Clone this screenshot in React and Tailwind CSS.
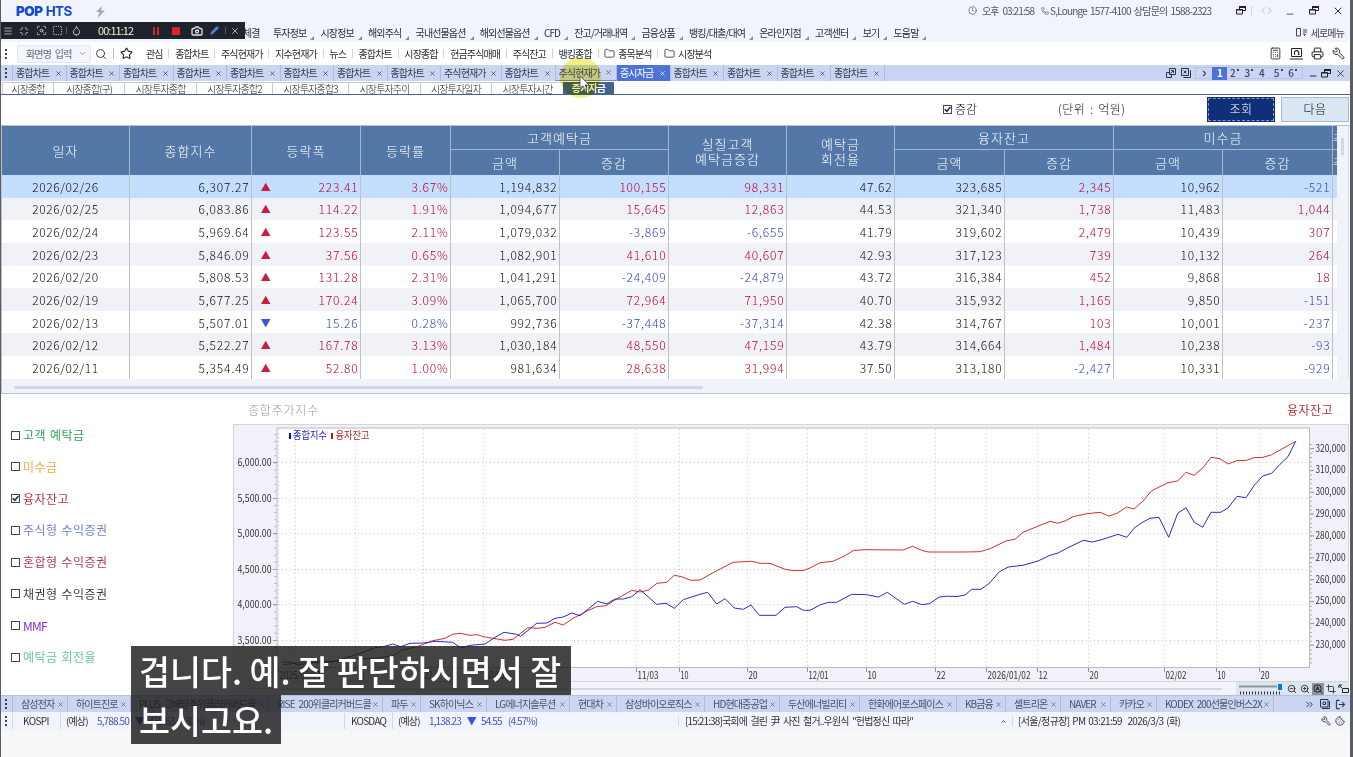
import React from 'react';
import {
    Calculator, Camera, ChevronDown, ChevronRight, ChevronUp, ChevronsRight, Clock, Code, Cookie,
    Crop, Droplet, Folder, LogOut, Menu, Minimize, Minus, Pencil, Phone, Printer, ScanSearch, Search,
    SquareDashed, Star, Wrench, X, ZoomIn, ZoomOut,
} from 'lucide-react';

const MENUS = ['투자정보', '시장정보', '해외주식', '국내선물옵션', '해외선물옵션', 'CFD', '잔고/거래내역', '금융상품', '뱅킹/대출/대여', '온라인지점', '고객센터', '보기', '도움말'];

const QUICK = ['관심', '종합차트', '주식현재가', '지수현재가', '뉴스', '종합차트', '시장종합', '현금주식매매', '주식잔고', '뱅킹종합'];

const TABS = [
    ...Array(8).fill({ name: '종합차트', w: 53.5 }),
    { name: '주식현재가', w: 60.5 },
    { name: '종합차트', w: 54 },
    { name: '주식현재가', w: 61.5, hover: true },
    { name: '증시자금', w: 53.5, active: true },
    ...Array(4).fill({ name: '종합차트', w: 53.5 }),
];

const SUB_TABS = [
    { name: '시장종합', w: 51 },
    { name: '시장종합(구)', w: 71 },
    { name: '시장투자종합', w: 72 },
    { name: '시장투자종합2', w: 76 },
    { name: '시장투자종합3', w: 76 },
    { name: '시장투자추이', w: 72 },
    { name: '시장투자일자', w: 71 },
    { name: '시장투자시간', w: 72 },
];

const STOCKS = [
    { name: '삼성전자', w: 55 },
    { name: '하이트진로', w: 63 },
    { name: 'PLUS 고배당주위클리커버드콜', w: 138 },
    { name: 'RISE 200위클리커버드콜', w: 114 },
    { name: '파두', w: 38 },
    { name: 'SK하이닉스', w: 66 },
    { name: 'LG에너지솔루션', w: 83 },
    { name: '현대차', w: 47 },
    { name: '삼성바이오로직스', w: 88 },
    { name: 'HD현대중공업', w: 75 },
    { name: '두산에너빌리티', w: 80 },
    { name: '한화에어로스페이스', w: 97 },
    { name: 'KB금융', w: 49 },
    { name: '셀트리온', w: 55 },
    { name: 'NAVER', w: 50 },
    { name: '카카오', w: 46 },
    { name: 'KODEX 200선물인버스2X', w: 117 },
];

const ROWS = [
    ['2026/02/26', '6,307.27', '223.41', '3.67%', '1,194,832', '100,155', '98,331', '47.62', '323,685', '2,345', '10,962', '-521'],
    ['2026/02/25', '6,083.86', '114.22', '1.91%', '1,094,677', '15,645', '12,863', '44.53', '321,340', '1,738', '11,483', '1,044'],
    ['2026/02/24', '5,969.64', '123.55', '2.11%', '1,079,032', '-3,869', '-6,655', '41.79', '319,602', '2,479', '10,439', '307'],
    ['2026/02/23', '5,846.09', '37.56', '0.65%', '1,082,901', '41,610', '40,607', '42.93', '317,123', '739', '10,132', '264'],
    ['2026/02/20', '5,808.53', '131.28', '2.31%', '1,041,291', '-24,409', '-24,879', '43.72', '316,384', '452', '9,868', '18'],
    ['2026/02/19', '5,677.25', '170.24', '3.09%', '1,065,700', '72,964', '71,950', '40.70', '315,932', '1,165', '9,850', '-151'],
    ['2026/02/13', '5,507.01', '15.26', '0.28%', '992,736', '-37,448', '-37,314', '42.38', '314,767', '103', '10,001', '-237'],
    ['2026/02/12', '5,522.27', '167.78', '3.13%', '1,030,184', '48,550', '47,159', '43.79', '314,664', '1,484', '10,238', '-93'],
    ['2026/02/11', '5,354.49', '52.80', '1.00%', '981,634', '28,638', '31,994', '37.50', '313,180', '-2,427', '10,331', '-929'],
];

const COLS = 'grid grid-cols-[128px_122px_109px_90px_109px_109px_118px_108px_110px_109px_109px_110px_4px]';
const SIGNED = [5, 6, 9, 11];

const SERIES = [
    { name: '고객 예탁금', color: 'text-[#2f9e5c]' },
    { name: '미수금', color: 'text-[#eba84e]' },
    { name: '융자잔고', color: 'text-[#b8323c]', checked: true },
    { name: '주식형 수익증권', color: 'text-[#6f82cf]' },
    { name: '혼합형 수익증권', color: 'text-[#b5335c]' },
    { name: '채권형 수익증권', color: 'text-[#3c3c3c]' },
    { name: 'MMF', color: 'text-[#8b2fc0]' },
    { name: '예탁금 회전율', color: 'text-[#6dbfb6]' },
];

const LOAN_LINE = '282,665 297,663 330,662 345,660 358,658.7 377,658 393,655.7 402,650 417,646.7 433,640.7 445,638.3 452.7,634.3 460,633.3 470,635.3 477,634.7 485,637 493,638.3 505,640.3 513,639.3 527.7,627.7 538,628.3 545,627.3 555,622.3 563.3,625 573,618.3 587,611 596.7,606.7 606,605.7 615,600 631.7,590.3 640,592 648,590.3 657,583.3 666.7,582.3 674.3,575.3 681.7,576.7 690.7,580.3 700,580 716.7,570.7 733.3,562.3 751.7,561.3 760,563.3 770,563.3 785,569.3 793,570.6 803,570.6 810,568 820,562.7 833,561.3 845,555.7 853.3,550.5 865,549.7 903.3,550 912.7,546.3 921.7,550.3 928,552 963,552 980,551.7 990,548.7 1006.7,540.7 1015,539.3 1023,532.3 1050,521.3 1057.7,523.3 1065,521 1073,516.7 1086.7,513.7 1100,512.3 1109,516 1117,513.3 1126.7,507 1134,509 1143,501 1151.7,490.7 1168,482.7 1177.7,481 1186,472.3 1194,475.3 1203,467.7 1211,457.3 1220,458.7 1228,464 1236.7,460.7 1246.7,460.3 1254,457.7 1263,457.3 1271.7,454.7 1295.7,441.3';
const INDEX_LINE = '282,662 291.7,662.3 298,665 315,662.3 336.7,661 345,658.3 360,653.3 375,647.7 383.3,646.7 392.7,644 400.7,646.7 410,643.3 423.3,643 435,641.3 452.7,642.3 461,648 470,645.3 485,644 495,637.3 504,632.3 516.7,634.3 520.7,636.3 536.7,623.3 546.7,623 555,618.3 563.3,617 571.7,613 580,615.7 588.3,609 597.7,601.3 606.7,604 615,599 623.3,599 631.7,596.7 640,589.7 656.7,604.3 666,603.3 674.3,608.3 683.3,599.7 700,594.3 707.7,592.3 716.7,604 725,598.7 734.3,608 743.3,609.3 751,605 759.3,615.3 776,615.3 785,607.3 796.7,606.7 803.3,610.3 810,610.3 820,605 828.3,602.3 836.7,602.3 851.7,594.3 866.7,594.7 878.3,597 887.3,592.3 904.3,604.3 912.7,601.3 921.7,604.7 929.3,603.7 939.3,597 947,596.2 957,596.5 965,595 971.7,589.3 981,589.3 990,582.7 999.3,571.7 1008.3,567 1023,565.3 1038,561 1050,555.3 1058,553 1066.7,548.3 1083.3,540.3 1092.3,542 1101.7,539.7 1118,534.3 1126.7,537.3 1134,528.3 1141.7,522.7 1150,518.3 1159,517.3 1168.7,537.3 1177.7,513.3 1186,507.7 1194.3,522.3 1202.7,527.3 1211,512.3 1220.7,512.3 1228,508 1237,496.3 1246,497.7 1254,485.7 1262.7,476 1271.7,473.3 1280,464.3 1288,456.7 1295.7,441.3';

const X_TICKS = [
    [278.5, '2025/09/01', 42], [355.5, '10', 8], [423.5, '22', 8], [483.5, '10/01', 21], [636.5, '11/03', 21], [679.5, '10', 8],
    [747.5, '20', 9], [807.5, '12/01', 20], [866.5, '10', 9], [935.5, '22', 9], [986.5, '2026/01/02', 43],
    [1037.5, '12', 9], [1088.5, '20', 9], [1164.5, '02/02', 21], [1216.5, '10', 8], [1259.5, '20', 9],
];
const LEFT_TICKS = [[462.5, '6,000.00'], [498.5, '5,500.00'], [533.5, '5,000.00'], [569.5, '4,500.00'], [604.5, '4,000.00'], [640.5, '3,500.00']];
const RIGHT_TICKS = ['320,000', '310,000', '300,000', '290,000', '280,000', '270,000', '260,000', '250,000', '240,000', '230,000'];

const Dots = () => (
    <svg className="w-[11px] shrink-0" height="12" viewBox="0 0 11 12">
        <path d="M4 1h2v2H4zM4 5h2v2H4zM4 9h2v2H4z" fill="#3a4256" />
    </svg>
);

const Sep = () => <span className="mx-[5.750px] h-[9px] w-px shrink-0 bg-[#cdd0d8]" />;

const Restore = ({ className = '' }) => (
    <svg className={className} width="10" height="9" viewBox="0 0 10 9" fill="none" stroke="#222">
        <path d="M3.5 3V.5h6v4H7" />
        <path d="M3 1h7" strokeWidth="2" />
        <path d="M.5 3.5h6v4.500h-6zM.5 4h6" />
    </svg>
);

const Arrow = ({ down }) => (
    <svg width="10" height="10" viewBox="0 0 10 10">
        {down ? <path d="M0 1h9.5L4.7 9.5z" fill="#3d55cf" /> : <path d="M0 9h9.5L4.7 .8z" fill="#cb1b3f" />}
    </svg>
);

const Check = ({ checked }) => (
    <span className="flex h-[9px] w-[9px] shrink-0 items-center justify-center border border-[#444b58] bg-white">
        {checked && (
            <svg width="7" height="7" viewBox="0 0 7 7" fill="none" stroke="#1c2c55" strokeWidth="1.6">
                <path d="M.8 3.2 2.8 5.4 6.4 1" />
            </svg>
        )}
    </span>
);

const TitleBar = () => (
    <div className="flex h-6 shrink-0 items-center bg-[#f1f4fc] pl-[15px]">
        <div className="flex h-full w-[80px] items-center text-[13.500px] font-bold tracking-[-0.5px] text-[#1549d6] [font-family:Inter,sans-serif]">
            <span className="font-black">POP</span>
            <span className="ml-[3px] tracking-[-0.7px]">HTS</span>
        </div>
        <svg width="9" height="12" viewBox="0 0 9 12">
            <path d="M6 0 0 6h3.5L1.5 12 9 4.6H5z" fill="#a3a6ad" />
        </svg>
        <div className="ml-auto flex items-center pb-[3px] pr-[6px] text-[#555]">
            <Clock size={9} strokeWidth={1.8} />
            <span className="ml-[5px] w-[51px] tracking-[-0.9px]">오후 03:21:58</span>
            <Phone className="ml-[8px]" size={8} strokeWidth={2} />
            <span className="ml-px w-[158px] tracking-[-0.78px] [word-spacing:1.5px]">S,Lounge 1577-4100 상담문의 1588-2323</span>
            <Restore className="ml-[28px]" />
            <span className="ml-[5px] h-[10px] w-px bg-[#cfd3dc]" />
            <Code className="ml-[9px] text-[#b5b8c0]" size={11} />
            <Minus className="ml-[13px] mt-[6px] text-[#777]" size={10} strokeWidth={3} />
            <Restore className="ml-[14px]" />
            <X className="ml-[13px] text-[#333]" size={12} strokeWidth={2} />
        </div>
    </div>
);

const MenuBar = () => (
    <div className="flex h-[18px] shrink-0 items-center bg-[#f1f4fc] pb-px pl-[242px]">
        <span className="w-[30px]">체결</span>
        {MENUS.map(name => (
            <div key={name} className="flex h-full items-center">
                <span>{name}</span>
                <svg className="ml-[4px] mr-[6.200px] mt-[11px]" width="4" height="4" viewBox="0 0 4 4">
                    <path d="M4 0v4H0z" fill="#8b909c" />
                </svg>
            </div>
        ))}
        <div className="ml-auto flex items-center pr-[6px] text-[#444]">
            <svg width="12" height="9" viewBox="0 0 12 9" fill="none" stroke="#444">
                <path d="M.5.5h4v7.500h-4zM7 2h4M7 4h4M7 6h2M8 8l2-2" />
            </svg>
            <span className="ml-[3px]">세로메뉴</span>
        </div>
    </div>
);

const ToolBar = () => (
    <div className="flex h-[23px] shrink-0 items-center bg-white">
        <Dots />
        <div className="ml-[5px] flex h-[18px] w-[74px] items-center justify-between rounded-[2px] border border-[#e0e5f0] bg-[#f3f5fb] pl-[8px] pr-[3px] text-[#737b8c]">
            <span className="font-medium">화면명 입력</span>
            <ChevronDown size={9} />
        </div>
        <Search className="ml-[4px] text-[#333]" size={12} strokeWidth={1.8} />
        <span className="ml-[6px] h-[11px] w-px bg-[#bfc3cc]" />
        <Star className="ml-[6px] mr-[13px] text-[#222]" size={13} strokeWidth={2} />
        {QUICK.map((name, i) => (
            <React.Fragment key={i}>
                <span>{name}</span>
                <Sep />
            </React.Fragment>
        ))}
        <Folder className="mr-[3px]" size={11} strokeWidth={1.8} />
        <span>종목분석</span>
        <Sep />
        <Folder className="mr-[3px]" size={11} strokeWidth={1.8} />
        <span>시장분석</span>
        <div className="ml-auto flex items-center gap-[8px] pr-[5px] text-[#222]">
            <Calculator size={13} strokeWidth={1.6} />
            <svg width="13" height="13" viewBox="0 0 13 13" fill="none" stroke="#222">
                <path d="M1.500 1.500h10v8h-10zM0 12h13" />
                <path d="M5 7.500H4M8 7.500h1.500M5.200 7.500a2.200 2.200 0 1 1 2.800 0" strokeWidth="1.200" />
            </svg>
            <Printer size={13} strokeWidth={1.8} />
            <Wrench className="-scale-x-100" size={13} strokeWidth={1.8} />
        </div>
    </div>
);

const tabClass = tab => {
    if (tab.active) return 'bg-[#4d72da] text-white';
    if (tab.hover) return 'border-b border-b-[#7d85a8] text-[#444c60]';
    return 'text-[#333b50]';
};

const TabBar = () => (
    <div className="flex h-4 shrink-0 items-center bg-[#cbd5f1]">
        <Dots />
        {TABS.map((tab, i) => (
            <div
                key={i}
                className={`flex h-full shrink-0 items-center justify-between border-l border-[#b0bcdd] pl-[3px] pr-[4px] ${tabClass(tab)}`}
                style={{ width: tab.w }}
            >
                <span>{tab.name}</span>
                <X size={7} strokeWidth={2.4} />
            </div>
        ))}
        <span className="h-full w-px bg-[#b0bcdd]" />
        <div className="ml-auto flex h-full items-center pr-[4px] text-[#2b3142]">
            <svg width="10" height="10" viewBox="0 0 10 10" fill="none" stroke="#2b3142">
                <path d="M3.500.5h6v6h-6zM3 4.500H.5v5h5V7M4.500 5.500l3-3M5.200 2.500h2.300v2.300" />
            </svg>
            <svg className="ml-[5px]" width="10" height="10" viewBox="0 0 10 10" fill="none" stroke="#2b3142">
                <path d="M.5.5h7v7h-7zM2.500 9.500h7v-7M2.500 2.500l3 3M5.500 2.500l-3 3" />
            </svg>
            <div className="ml-[4px] flex h-[12px] w-[108px] items-center border border-[#b9c4e4] font-medium text-[#3c4560]">
                <ChevronRight className="ml-[4px] mr-[3px]" size={9} strokeWidth={3} />
                <span className="flex h-[13px] w-[15px] items-center justify-center bg-[#4d72da] font-bold text-white">1</span>
                {['2', '3', '4', '5', '6'].map(n => (
                    <span key={n} className="flex w-[14.600px] items-center justify-center">
                        {n}
                        <span className={`mb-[7px] ml-[2px] h-[2px] w-[2px] ${n === '4' ? '' : 'bg-[#3c4560]'}`} />
                    </span>
                ))}
            </div>
            <Minus className="ml-[5px] mt-[6px]" size={10} strokeWidth={2.4} />
            <Restore className="ml-[3px]" />
            <X className="ml-[4px]" size={11} strokeWidth={2} />
        </div>
    </div>
);

const SubTabBar = () => (
    <div className="flex h-[14px] shrink-0 border-b border-[#4e6288] bg-white pl-px">
        {SUB_TABS.map(tab => (
            <span
                key={tab.name}
                className="mt-px flex items-center justify-center border-l border-t border-[#c9c9cc] font-light text-[#222]"
                style={{ width: tab.w }}
            >
                {tab.name}
            </span>
        ))}
        <span className="mt-px flex w-[51px] items-center justify-center bg-[#44628f] font-bold text-white">증시자금</span>
    </div>
);

const FilterBar = () => (
    <div className="flex h-[30px] shrink-0 items-center bg-white pb-[2px] text-[12px] font-light tracking-[0.5px] text-[#111] [word-spacing:1.500px]">
        <div className="ml-[942px] flex w-[115px] items-center gap-[3px] tracking-[0px]">
            <Check checked />
            <span>증감</span>
        </div>
        <span className="w-[149px]">(단위 : 억원)</span>
        <button className="h-[25px] w-[68px] bg-[#0f2f78] p-px text-white">
            <span className="flex h-full items-center justify-center border border-dashed border-[#8497c6]">조회</span>
        </button>
        <button className="ml-[6px] h-[25px] w-[68px] border border-[#a9bccf] bg-[#d9e6f4]">다음</button>
    </div>
);

const Head = ({ className = '', children }) => (
    <div className={`flex items-center justify-center border-r border-[#a3b6d0] ${className}`}>{children}</div>
);

const FundTable = () => (
    <div className="h-[269px] shrink-0 border-b border-l border-t border-[#bcc0c8] bg-[#f1f3fa]">
        <div className="flex">
            <div className="w-[1335px] overflow-hidden">
                <div className={`${COLS} grid-rows-[24px_25px] bg-[#5378a7] text-[13px] font-light leading-[15px] tracking-[1px] text-white`}>
                    <Head className="row-span-2">일자</Head>
                    <Head className="row-span-2">종합지수</Head>
                    <Head className="row-span-2">등락폭</Head>
                    <Head className="row-span-2">등락률</Head>
                    <Head className="col-span-2 border-b">고객예탁금</Head>
                    <Head className="row-span-2 text-center">실질고객<br />예탁금증감</Head>
                    <Head className="row-span-2 text-center">예탁금<br />회전율</Head>
                    <Head className="col-span-2 border-b">융자잔고</Head>
                    <Head className="col-span-2 border-b">미수금</Head>
                    <div className="overflow-hidden border-b border-[#a3b6d0] pt-[5px]">주</div>
                    <Head>금액</Head>
                    <Head>증감</Head>
                    <Head>금액</Head>
                    <Head>증감</Head>
                    <Head>금액</Head>
                    <Head>증감</Head>
                    <div className="overflow-hidden pt-[5px]">주</div>
                </div>
                {ROWS.map((row, r) => {
                    const down = row[0] === '2026/02/13';
                    return (
                        <div
                            key={row[0]}
                            className={`${COLS} h-[22.650px] text-[12px] font-light tracking-[0.8px] text-[#0c0c10] ${r === 0 ? 'bg-[#c4defe]' : r % 2 ? 'bg-[#f1f2f7]' : 'bg-white'}`}
                        >
                            {row.map((value, c) => {
                                let color = '';
                                if (c === 2 || c === 3) color = down ? 'text-[#2f44bc]' : 'text-[#b80030]';
                                if (SIGNED.includes(c)) color = value.startsWith('-') ? 'text-[#2f44bc]' : 'text-[#b80030]';
                                return (
                                    <div
                                        key={c}
                                        className={`flex items-center border-r border-[#bfc1c8] pt-px ${c === 0 ? 'justify-center tracking-[0.55px]' : 'justify-end pr-[1.500px]'} ${color}`}
                                    >
                                        {c === 2 && <span className="ml-[9px] mr-auto"><Arrow down={down} /></span>}
                                        {value}
                                    </div>
                                );
                            })}
                            <div />
                        </div>
                    );
                })}
            </div>
            <div className="flex w-[12px] justify-center border-r border-[#d9dce6] pt-[12px]">
                <span className="h-[17px] w-[3px] bg-[#d6d8e2]" />
            </div>
        </div>
        <div className="ml-[12px] mt-[7px] h-[3px] w-[689px] rounded bg-[#d5d8e4]" />
    </div>
);

const Chart = () => (
    <svg className="block text-[10px] font-normal tracking-normal" width="1116" height="258" viewBox="233 424 1116 258" fill="#333">
        <rect x="233.5" y="424.5" width="1115" height="257" fill="#f1f2f9" stroke="#d3d5dc" />
        <rect x="277" y="428" width="1032.500" height="239.500" fill="#fff" stroke="#b8bcc4" />
        <g stroke="#c9c9ce" strokeDasharray="1 3">
            {LEFT_TICKS.map(([y]) => <path key={y} d={`M278 ${y}H1309`} />)}
            {X_TICKS.map(([x]) => <path key={x} d={`M${x} 429V667`} />)}
            <path d="M295.500 429V667" />
        </g>
        <g stroke="#8d929c">
            {LEFT_TICKS.map(([y]) => <path key={y} d={`M273 ${y}h4`} />)}
            {X_TICKS.map(([x]) => <path key={x} d={`M${x} 668v4`} />)}
            {RIGHT_TICKS.map((t, i) => <path key={t} d={`M1310 ${448.5 + i * 21.85}h4`} />)}
        </g>
        <path d="M275.500 434V664" stroke="#a9adb6" strokeWidth="2" strokeDasharray="1 6.100" />
        <path d="M1311 444V664" stroke="#a9adb6" strokeWidth="2" strokeDasharray="1 3.370" />
        {LEFT_TICKS.map(([y, label]) => (
            <text key={label} x="237.500" y={y + 3} textLength="34" lengthAdjust="spacingAndGlyphs">{label}</text>
        ))}
        {RIGHT_TICKS.map((label, i) => (
            <text key={label} x="1315.500" y={451.500 + i * 21.85} textLength="30" lengthAdjust="spacingAndGlyphs">{label}</text>
        ))}
        {X_TICKS.map(([x, label, w]) => (
            <text key={x} x={x + 1} y="679" textLength={w} lengthAdjust="spacingAndGlyphs">{label}</text>
        ))}
        <rect x="289" y="433" width="2" height="6" fill="#0d0dc4" />
        <text x="293" y="439" fill="#2222c0" textLength="34" lengthAdjust="spacingAndGlyphs">종합지수</text>
        <rect x="331" y="433" width="2" height="6" fill="#c41212" />
        <text x="335.500" y="439" fill="#b82525" textLength="34" lengthAdjust="spacingAndGlyphs">융자잔고</text>
        <polyline points={LOAN_LINE} fill="none" stroke="#cf3030" />
        <polyline points={INDEX_LINE} fill="none" stroke="#2b2bc8" />
    </svg>
);

const ChartSection = () => (
    <div className="flex h-[301px] shrink-0 bg-white text-[12px] tracking-[0.45px] [word-spacing:1px]">
        <div className="flex w-[232px] shrink-0 flex-col gap-[11.750px] pl-[10px] pt-[31px] leading-5">
            {SERIES.map(item => (
                <div key={item.name} className={`flex h-5 items-center gap-[3px] ${item.color}`}>
                    <Check checked={item.checked} />
                    <span className={item.name === 'MMF' ? 'tracking-[-0.8px]' : ''}>{item.name}</span>
                </div>
            ))}
        </div>
        <div className="flex w-[1116px] flex-col">
            <div className="flex h-[30px] items-center justify-between pl-[15px] pr-[16px] pt-[2px]">
                <span className="font-light text-[#999] tracking-[0.8px]">종합주가지수</span>
                <span className="text-[#b03434]">융자잔고</span>
            </div>
            <Chart />
            <div className="flex h-[13px] items-center justify-between bg-[#f3f4fa]">
                <span className="ml-[13px] h-[2px] w-[976px] bg-[#d3d6e4]" />
                <div className="flex h-full w-[113px] items-center bg-[#dde5f0] text-[#333]">
                    <svg className="ml-[3px]" width="44" height="13" viewBox="0 0 44 13">
                        <path d="M0 4.500h38" stroke="#8d959f" strokeWidth="2" />
                        <path d="M1 11H43" stroke="#333" strokeWidth="3" strokeDasharray="1 2" />
                        <rect x="39" y="2" width="4" height="6" fill="#0b76d6" />
                    </svg>
                    <ZoomOut className="ml-[4px]" size={10} strokeWidth={2.2} />
                    <ZoomIn className="ml-[3px]" size={10} strokeWidth={2.2} />
                    <span className="ml-[2px] flex h-[12px] w-[12px] items-center justify-center bg-[#8c939d]">
                        <svg width="10" height="10" viewBox="0 0 10 10" fill="none" stroke="#222">
                            <circle cx="4.500" cy="4.500" r="3.700" />
                            <path d="M7 7l2.500 2.500M3 6.300 4.500 2.500 6 6.300M3.500 5h2" />
                        </svg>
                    </span>
                    <Crop className="ml-[2px]" size={10} strokeWidth={2.2} />
                    <svg className="ml-[2px]" width="11" height="10" viewBox="0 0 11 10" fill="none" stroke="#222">
                        <path d="M1 4V1h3M1 1l3 3M4.500 4.500h6v4h-6z" />
                    </svg>
                </div>
            </div>
        </div>
    </div>
);

const StockTabs = () => (
    <div className="flex h-[17px] shrink-0 items-center border-t border-[#b5c0de] bg-[#cbd5f1] text-[#4a5264]">
        <Dots />
        {STOCKS.map(stock => (
            <div
                key={stock.name}
                className="flex h-full shrink-0 items-center justify-between overflow-hidden border-l border-[#b0bcdd] pl-[8px] pr-[3px]"
                style={{ width: stock.w }}
            >
                <span className="whitespace-nowrap">{stock.name}</span>
                <X className="shrink-0" size={7} strokeWidth={2.2} />
            </div>
        ))}
        <span className="h-full w-px bg-[#b0bcdd]" />
        <div className="ml-auto flex items-center gap-[5px] pr-[4px] text-[#2b3142]">
            <ChevronsRight size={11} strokeWidth={2} />
            <svg width="10" height="10" viewBox="0 0 10 10" fill="none" stroke="#2b3142">
                <path d="M.5.5h7.500v7.500H.5zM2 9.500h7.500V2M3 3h2.500v2.500H3z" />
            </svg>
            <LogOut size={11} strokeWidth={2.2} />
        </div>
    </div>
);

const Quote = ({ name, nameClass, price, diff, rate }) => (
    <>
        <span className={nameClass}>{name}</span>
        <span className="h-[16px] w-px bg-[#d3d8e6]" />
        <span className="ml-[5px] w-[31px] shrink-0">(예상)</span>
        <span className="w-[38px] text-[#4555c4]">{price}</span>
        <Arrow down />
        <span className="ml-[4px] w-[27px] text-[#4555c4]">{diff}</span>
        <span className="w-[80px] text-[#4555c4]">{rate}</span>
    </>
);

const StatusBar = () => (
    <div className="flex h-[18px] shrink-0 items-center bg-[#f1f4fd] text-[#333]">
        <Dots />
        <div className="flex w-[332px] shrink-0 items-center border-l border-[#d3d8e6]">
            <Quote name="KOSPI" nameClass="ml-[10px] w-[37px] tracking-[-0.6px]" price="5,788.50" diff="455.63" rate="(7.30%)" />
        </div>
        <div className="flex w-[334px] shrink-0 items-center border-l border-[#d3d8e6]">
            <Quote name="KOSDAQ" nameClass="ml-[6px] w-[41px] tracking-[-0.75px]" price="1,138.23" diff="54.55" rate="(4.57%)" />
        </div>
        <div className="flex w-[334px] shrink-0 items-center justify-between border-l border-[#d3d8e6] pl-[6px] pr-[5px]">
            <span className="tracking-[-0.86px] [word-spacing:2px]">[15:21:38]국회에 걸린 尹 사진 철거..우원식 "헌법정신 따라"</span>
            <ChevronUp size={7} strokeWidth={3} />
        </div>
        <span className="border-l border-[#d3d8e6] pl-[5px] tracking-[-0.65px] [word-spacing:1.200px]">[서울/정규장] PM 03:21:59&nbsp; 2026/3/3 (화)</span>
        <div className="ml-auto flex items-center gap-[4px] pr-[5px]">
            <Wrench className="-scale-x-100" size={10} strokeWidth={2} />
            <Cookie size={10} strokeWidth={2} />
        </div>
    </div>
);

const Recorder = () => (
    <div className="absolute left-0 top-[22px] flex h-[17px] w-[244px] items-center bg-[#1f232b] text-[#c3c6cc]">
        <Menu className="ml-[2px]" size={10} strokeWidth={2} />
        <Minimize className="ml-[6px]" size={10} strokeWidth={2} />
        <ScanSearch className="ml-[7px]" size={11} strokeWidth={2} />
        <SquareDashed className="ml-[5px]" size={11} strokeWidth={2} />
        <span className="ml-[3px] h-[7px] w-px bg-[#555a64]" />
        <Droplet className="ml-[4px]" size={11} strokeWidth={2} />
        <span className="ml-[16px] w-[55px] text-[11px] tracking-[-0.95px] text-[#eef0c8]">00:11:12</span>
        <span className="h-[8px] w-[2px] bg-[#d6252b]" />
        <span className="ml-[2px] h-[8px] w-[2px] bg-[#d6252b]" />
        <span className="ml-[13px] h-[8px] w-[8px] bg-[#d6252b]" />
        <Camera className="ml-[11px] text-[#e3e5e8]" size={12} strokeWidth={2.6} />
        <Pencil className="ml-[7px] fill-[#4f8be0] text-[#4f8be0]" size={9} strokeWidth={2} />
        <span className="ml-[6px] h-[7px] w-px bg-[#555a64]" />
        <X className="ml-[4px]" size={10} strokeWidth={2} />
    </div>
);

const Pointer = () => (
    <>
        <span className="absolute left-[559px] top-[57px] h-[41px] w-[41px] rounded-full bg-[#f3f08c] mix-blend-multiply" />
        <svg className="absolute left-[578px] top-[75px]" width="11" height="16" viewBox="0 0 11 16">
            <path d="M1 .8v12.500l3-2.500 1.800 4 2-1-1.800-3.800h4z" fill="#fff" stroke="#444" strokeWidth=".8" />
        </svg>
    </>
);

const Subtitle = () => (
    <div className="absolute left-[130px] top-[646px] flex flex-col items-start text-[33.700px] font-medium leading-[49px] tracking-normal text-white [word-spacing:0px]">
        <span className="flex h-[49px] w-[440px] items-center whitespace-nowrap bg-[#1b1b1b]/82 pl-[8px]">겁니다. 예. 잘 판단하시면서 잘</span>
        <span className="flex h-[49px] w-[150px] items-center bg-[#1b1b1b]/82 pl-[8px]">보시고요.</span>
    </div>
);

export default function App() {
    return (
        <div className="relative flex h-[757px] w-[1353px] flex-col overflow-hidden whitespace-nowrap border-l border-r-[3px] border-[#5b5c60] bg-[#f7f7f8] text-[10px] leading-none tracking-[-0.87px] text-[#2c2f38] [font-family:'Noto_Sans_CJK_KR',sans-serif] [word-spacing:2.5px]">
            <TitleBar />
            <MenuBar />
            <ToolBar />
            <TabBar />
            <SubTabBar />
            <FilterBar />
            <FundTable />
            <ChartSection />
            <StockTabs />
            <StatusBar />
            <Recorder />
            <Pointer />
            <Subtitle />
        </div>
    );
}
